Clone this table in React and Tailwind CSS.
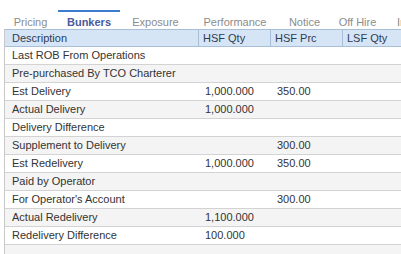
import React from 'react';

const tabs = [
  { label: 'Pricing', w: 'w-[55px]' },
  { label: 'Bunkers', w: 'w-[62px]', active: true },
  { label: 'Exposure', w: 'w-[71px]' },
  { label: 'Performance', w: 'w-[88px]' },
  { label: 'Notice', w: 'w-[51px]' },
  { label: 'Off Hire', w: 'w-[55px]' },
];

const rows = [
  { desc: 'Last ROB From Operations' },
  { desc: 'Pre-purchased By TCO Charterer' },
  { desc: 'Est Delivery', qty: '1,000.000', prc: '350.00' },
  { desc: 'Actual Delivery', qty: '1,000.000' },
  { desc: 'Delivery Difference' },
  { desc: 'Supplement to Delivery', prc: '300.00' },
  { desc: 'Est Redelivery', qty: '1,000.000', prc: '350.00' },
  { desc: 'Paid by Operator' },
  { desc: "For Operator's Account", prc: '300.00' },
  { desc: 'Actual Redelivery', qty: '1,100.000' },
  { desc: 'Redelivery Difference', qty: '100.000' },
  { desc: '' },
];

const App = () => {
  return (
    <div className="w-[401px] h-[254px] overflow-hidden bg-white font-['Liberation_Sans',Arial,sans-serif] text-[11px]">
      {/* Tabs */}
      <div className="flex pl-[3px] pt-[10px] h-[29px] whitespace-nowrap overflow-hidden">
        {tabs.map((t) => (
          <div
            key={t.label}
            className={`${t.w} shrink-0 text-center pt-[4px] border-t-2 ${
              t.active ? 'border-[#3b7bd0]' : 'border-transparent'
            }`}
          >
            <span
              className={`block text-[11px] leading-[13px] ${
                t.active ? 'font-bold text-[#4a5a9c]' : 'text-[#8c8c8c]'
              }`}
            >
              {t.label}
            </span>
          </div>
        ))}
        <div className="shrink-0 pl-[12px] pt-[6px] text-[11px] leading-[13px] text-[#8c8c8c]">
          Invoices
        </div>
      </div>

      {/* Grid */}
      <div className="ml-[4px] border-l border-[#c9c9c9]">
        <div className="flex h-[18px] bg-[#d6e5f6] border-y border-[#a9bfd8] text-[#2c3c54] leading-[16px]">
          <div className="w-[194px] shrink-0 pl-[7px] border-r border-[#a9bfd8]">Description</div>
          <div className="w-[72px] shrink-0 pl-[4px] border-r border-[#a9bfd8]">HSF Qty</div>
          <div className="w-[72px] shrink-0 pl-[4px] border-r border-[#a9bfd8]">HSF Prc</div>
          <div className="w-[59px] shrink-0 pl-[4px] border-r border-[#a9bfd8]">LSF Qty</div>
          <div className="flex-1" />
        </div>
        {rows.map((r, i) => (
          <div
            key={i}
            className={`flex h-[18px] border-b border-[#d3d3d3] text-[#333333] leading-[17px] ${
              i % 2 === 1 ? 'bg-[#f4f4f4]' : 'bg-white'
            }`}
          >
            <div className="w-[194px] shrink-0 pl-[7px] whitespace-nowrap">{r.desc}</div>
            <div className="w-[72px] shrink-0 pl-[6px]">{r.qty}</div>
            <div className="w-[72px] shrink-0 pl-[6px]">{r.prc}</div>
            <div className="flex-1" />
          </div>
        ))}
      </div>
    </div>
  );
};

export default App;
